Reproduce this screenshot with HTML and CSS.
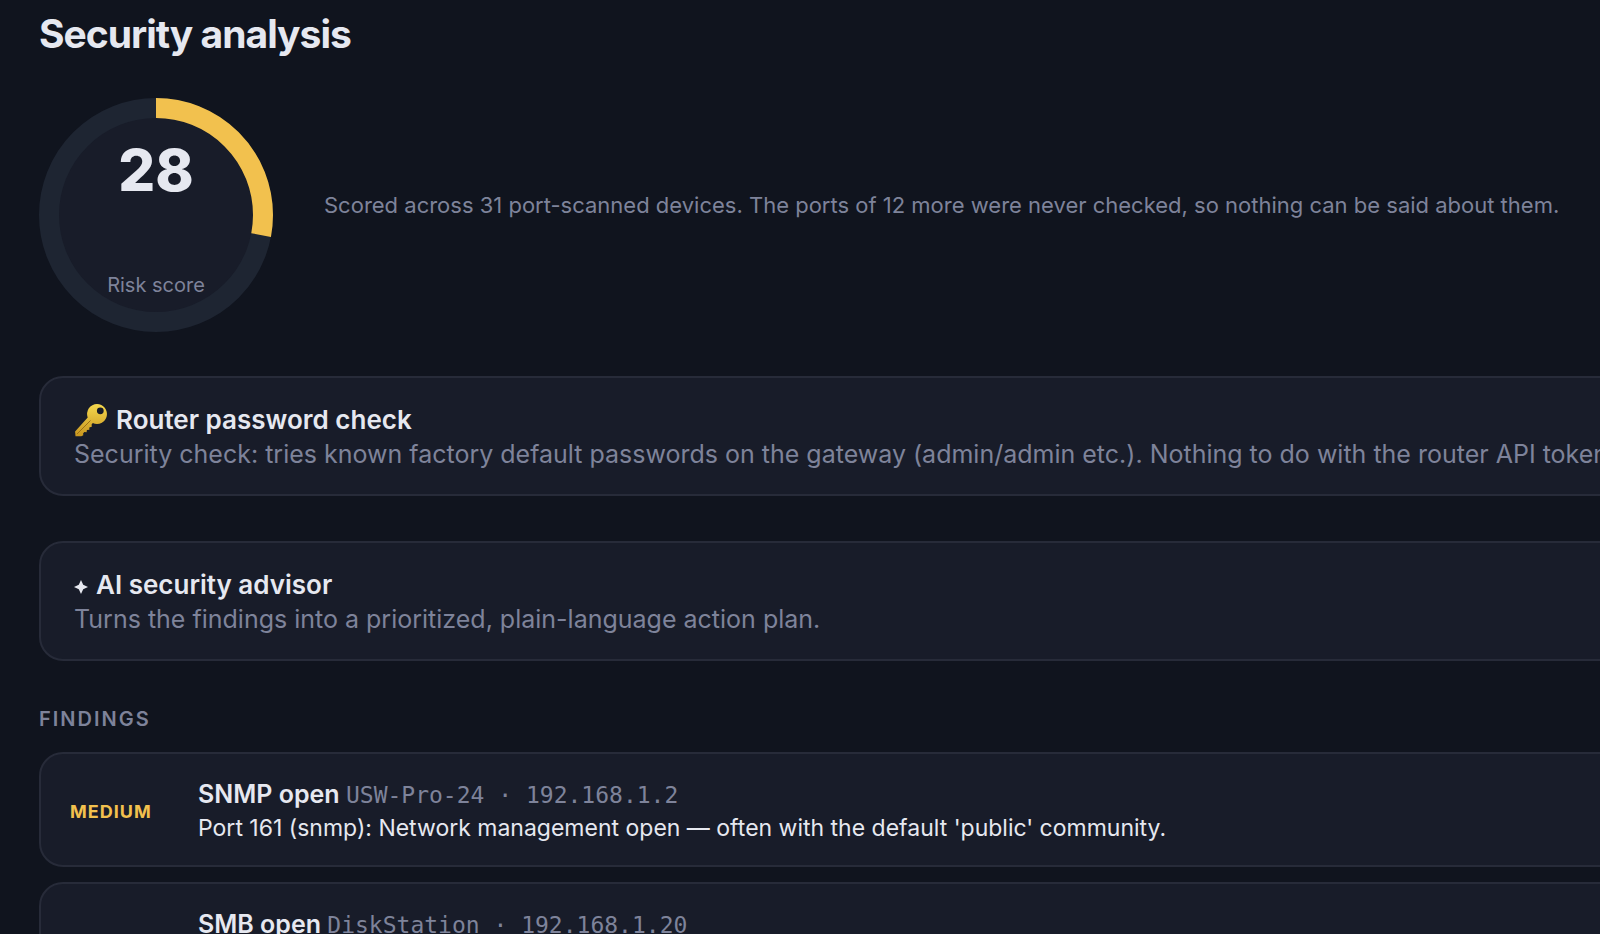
FILE: index.html
```
<!DOCTYPE html>
<html lang="en">
<head>
  <meta charset="UTF-8">
  <meta name="viewport" content="width=device-width, initial-scale=1.0">
  <title>Security analysis</title>
  <link rel="stylesheet" href="styles.css">
</head>
<body>
  <main class="page">
    <h1>Security analysis</h1>

    <section class="score">
      <div class="ring">
        <svg class="ring-chart" viewBox="0 0 234 234" aria-hidden="true">
          <circle class="ring-fill" cx="117" cy="117" r="98"/>
          <circle class="ring-track" cx="117" cy="117" r="107"/>
          <circle class="ring-value" cx="117" cy="117" r="107" pathLength="100" stroke-dasharray="28 100" transform="rotate(-90 117 117)"/>
        </svg>
        <strong class="ring-number">28</strong>
        <span class="ring-label">Risk score</span>
      </div>
      <p class="score-note">Scored across 31 port-scanned devices. The ports of 12 more were never checked, so nothing can be said about them.</p>
    </section>

    <section class="card">
      <h2>
        <svg class="icon-key" viewBox="0 0 34 34" aria-hidden="true">
          <defs>
            <linearGradient id="gold" x1="0" y1="0" x2="0" y2="1">
              <stop offset="0" stop-color="#f5d84e"/>
              <stop offset="1" stop-color="#c8961f"/>
            </linearGradient>
          </defs>
          <path fill="url(#gold)" fill-rule="evenodd" d="M23 1a10 10 0 1 1-4.200 19.100l-1.200 1.300.2 2.400-2.500.6.100 2.300-2.500.3-.3 2.200-2.300-.1-1.200 1.300.2 1.900-2 .9H1.500l-.4-4.600L13.700 14.500A10 10 0 0 1 23 1zm3.300 3.400a3.400 3.400 0 1 0 0 6.800 3.400 3.400 0 0 0 0-6.800z"/>
          <path fill="none" stroke="#9c6f16" stroke-width="1" d="M3 31 16.500 17.500"/>
        </svg>
        Router password check
      </h2>
      <p>Security check: tries known factory default passwords on the gateway (admin/admin etc.). Nothing to do with the router API token.</p>
    </section>

    <section class="card">
      <h2>
        <svg class="icon-spark" viewBox="0 0 14 18" aria-hidden="true">
          <path fill="currentColor" d="M7 4 9.200 8.800 14 11 9.200 13.200 7 18 4.800 13.200 0 11 4.800 8.800z"/>
        </svg>
        AI security advisor
      </h2>
      <p>Turns the findings into a prioritized, plain-language action plan.</p>
    </section>

    <h3>Findings</h3>
    <ul class="findings">
      <li class="finding">
        <span class="severity">Medium</span>
        <div>
          <div class="finding-title">SNMP open <code>USW-Pro-24 · 192.168.1.2</code></div>
          <p>Port 161 (snmp): Network management open — often with the default 'public' community.</p>
        </div>
      </li>
      <li class="finding">
        <span class="severity">Medium</span>
        <div>
          <div class="finding-title">SMB open <code>DiskStation · 192.168.1.20</code></div>
          <p>Port 445 (smb): File sharing open.</p>
        </div>
      </li>
    </ul>
  </main>
</body>
</html>
```
FILE: styles.css
```
* {
  box-sizing: border-box;
}
body {
  margin: 0;
  height: 100vh;
  overflow: hidden;
  background: #10141e;
  color: #e6e8f0;
  font-family: Inter, sans-serif;
}
h1, h2, h3, p, ul {
  margin: 0;
  padding: 0;
}
/* the panels run past the right edge of the window */
.page {
  margin-right: -48px;
  padding: 10px 0 0 39px;
}
h1 {
  font-size: 39px;
  line-height: 48px;
  font-weight: 700;
  letter-spacing: -1px;
}
.score {
  display: flex;
  align-items: center;
  gap: 51px;
  margin: 40px 0 44px;
}
.ring {
  display: grid;
  grid-template-rows: 1fr auto;
  justify-items: center;
  flex: none;
  width: 234px;
  height: 234px;
  padding: 36px 0 34px;
  position: relative;
}
.ring-chart {
  position: absolute;
  inset: 0;
}
.ring-fill {
  fill: #181c29;
}
.ring-track, .ring-value {
  fill: none;
  stroke: #1e2532;
  stroke-width: 20;
}
.ring-value {
  stroke: #f2c14e;
}
.ring-number {
  position: relative;
  font-size: 58px;
  line-height: 72px;
  font-weight: 800;
}
.ring-label {
  position: relative;
  font-size: 20px;
  line-height: 26px;
  color: #7e839a;
}
.score-note {
  padding-bottom: 20px;
  font-size: 22px;
  line-height: 32px;
  white-space: nowrap;
  color: #7e839a;
}
.card {
  margin-bottom: 45px;
  padding: 24px 33px 22px;
  border: 2px solid #272b39;
  border-radius: 24px;
  background: #181c29;
  font-size: 25px;
  line-height: 35px;
}
.card h2 {
  display: flex;
  align-items: center;
  gap: 8px;
  font-size: 26px;
  line-height: 35px;
  font-weight: 600;
}
.card p {
  white-space: nowrap;
  color: #7e839a;
}
.icon-key {
  width: 34px;
  height: 34px;
}
.icon-spark {
  width: 14px;
  height: 18px;
}
h3 {
  font-size: 20px;
  line-height: 27px;
  font-weight: 600;
  letter-spacing: 2px;
  text-transform: uppercase;
  color: #7e839a;
}
.findings {
  display: grid;
  gap: 15px;
  margin-top: 19px;
  list-style: none;
}
.finding {
  display: grid;
  grid-template-columns: 96px 1fr;
  align-items: center;
  gap: 32px;
  padding: 23px 29px 21px;
  border: 2px solid #272b39;
  border-radius: 24px;
  background: #181c29;
}
.severity {
  padding-top: 2px;
  font-size: 18px;
  font-weight: 700;
  text-transform: uppercase;
  letter-spacing: 1px;
  color: #f2c14e;
}
.finding-title {
  font-size: 25px;
  line-height: 35px;
  font-weight: 600;
}
.finding-title code {
  font-family: "DejaVu Sans Mono", monospace;
  font-size: 23px;
  line-height: 1;
  font-weight: 400;
  color: #7e839a;
}
.finding p {
  font-size: 23px;
  line-height: 32px;
}
```
